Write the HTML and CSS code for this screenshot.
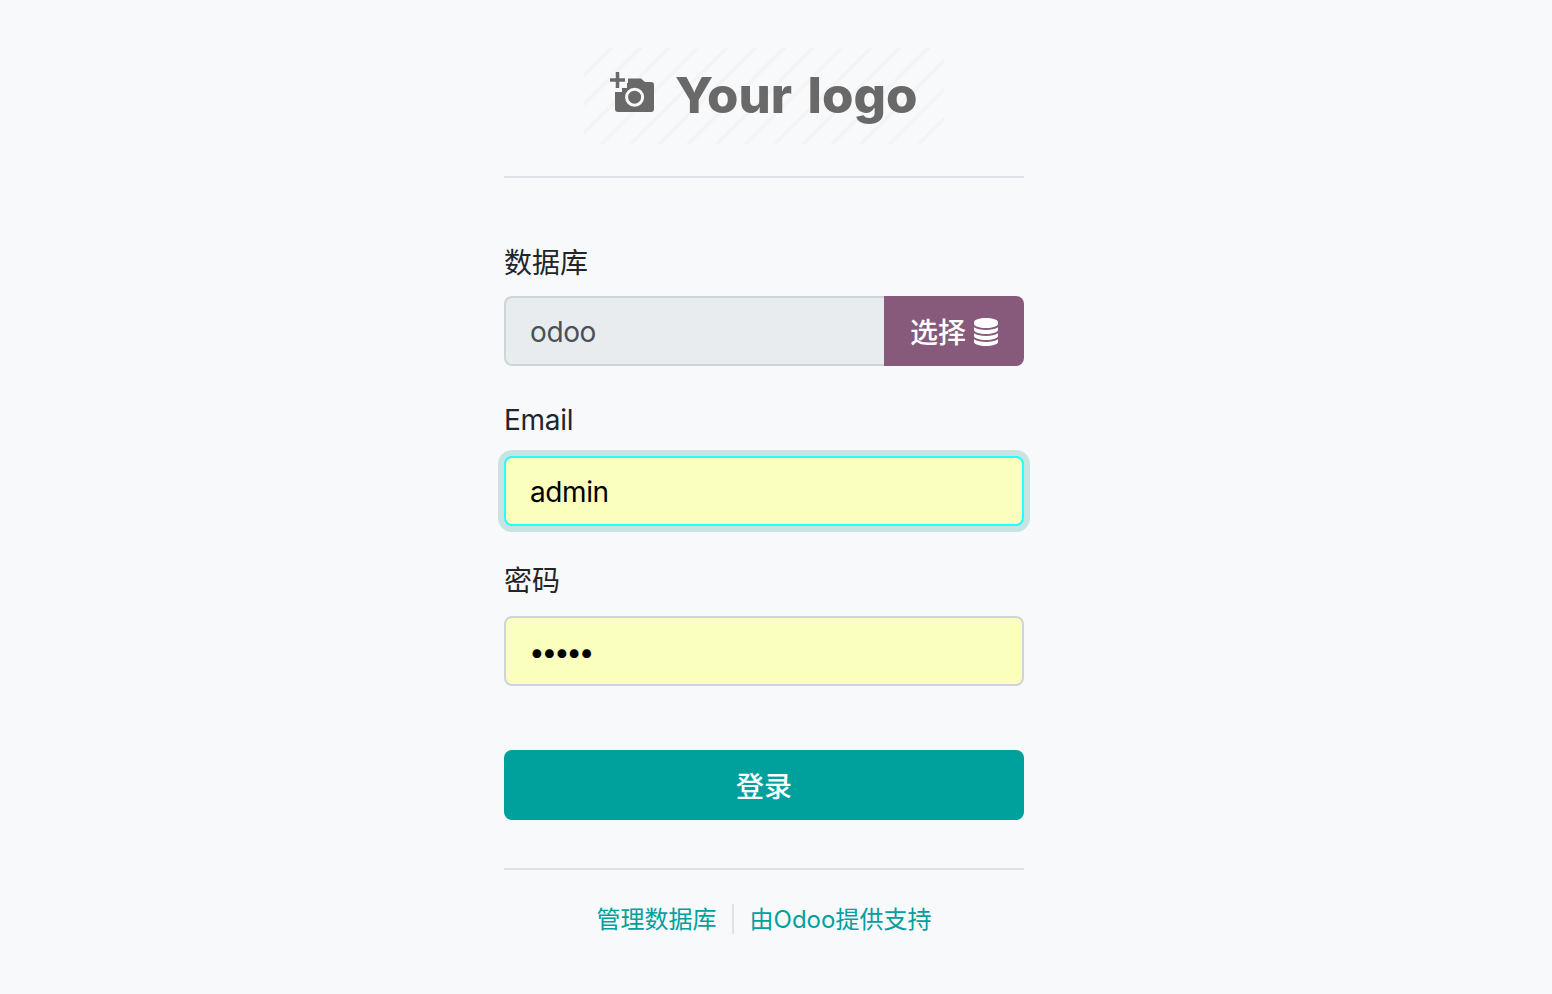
FILE: index.html
```html
<!DOCTYPE html>
<html lang="zh-CN">
<head>
<meta charset="utf-8">
<title>Odoo</title>
<link rel="stylesheet" href="styles.css">
</head>
<body>
<main class="login">
  <header class="brand">
    <svg class="logo" width="360" height="96" viewBox="0 0 360 96">
      <defs>
        <pattern id="stripes" width="28.8" height="28.8" patternUnits="userSpaceOnUse" patternTransform="translate(-1.5 0)">
          <path class="stripe" d="M-3 31.8 31.8-3M-17.4 17.4 17.4-17.4M11.4 46.2 46.2 11.4"/>
        </pattern>
      </defs>
      <rect width="360" height="96" fill="url(#stripes)"/>
      <g class="mark">
        <path d="M43 35V40H38V44H31V61Q31 64 34 64H67Q70 64 70 61V37Q70 34 67 34H61L57 30.500H44V35Z"/>
        <path class="plus" d="M33.500 24V40M26 32H41"/>
        <circle class="ring" cx="50.600" cy="49.200" r="8"/>
      </g>
      <text class="logo-text" x="91" y="64.500" textLength="117" lengthAdjust="spacingAndGlyphs">Your</text>
      <text class="logo-text" x="223.500" y="64.500" textLength="110" lengthAdjust="spacingAndGlyphs">logo</text>
    </svg>
  </header>
  <form class="form">
    <label class="label" for="db">数据库</label>
    <div class="group">
      <input class="control db" id="db" value="odoo" readonly>
      <button class="select" type="button"><span class="select-text">选择</span>
        <svg width="24" height="28" viewBox="0 0 24 28" fill="#fff"><path d="M12 0C18.600 0 24 1.800 24 4V6C24 8.200 18.600 10 12 10S0 8.200 0 6V4C0 1.800 5.400 0 12 0ZM0 9.300C2.600 11.100 7.300 12 12 12S21.400 11.100 24 9.300V12C24 14.200 18.600 16 12 16S0 14.200 0 12ZM0 15.300C2.600 17.100 7.300 18 12 18S21.400 17.100 24 15.300V18C24 20.200 18.600 22 12 22S0 20.200 0 18ZM0 21.300C2.600 23.100 7.300 24 12 24S21.400 23.100 24 21.300V24C24 26.200 18.600 28 12 28S0 26.200 0 24Z"/></svg>
      </button>
    </div>
    <label class="label label-email" for="email">Email</label>
    <input class="control filled focused" id="email" value="admin">
    <label class="label label-password" for="password">密码</label>
    <input class="control filled password" id="password" type="password" value="admin">
    <button class="submit" type="button">登录</button>
  </form>
  <footer class="links">
    <a class="link">管理数据库</a>
    <a class="link powered">由Odoo提供支持</a>
  </footer>
</main>
</body>
</html>
```
FILE: styles.css
```css
* { box-sizing: border-box; }
body {
  margin: 0;
  background: #f8f9fb;
  color: #212529;
  font: 28px/42px Inter, "Noto Sans CJK SC", sans-serif;
}
.login { width: 520px; margin-left: 504px; padding-top: 48px; }
.brand {
  height: 130px;
  border-bottom: 2px solid #dee2e6;
  text-align: center;
}
.logo { display: block; margin: 0 auto; }
.stripe { stroke: #f3f4f6; stroke-width: 3.6; fill: none; }
.mark { fill: #696969; filter: blur(.6px); }
.plus { fill: none; stroke: #696969; stroke-width: 3.5; }
.ring { fill: #696969; stroke: #f8f9fb; stroke-width: 3; }
.logo-text { font: 800 50px Inter, sans-serif; fill: #696969; filter: blur(.6px); }
.form { display: flex; flex-direction: column; padding-top: 64px; }
.label { height: 54px; }
.label-email { height: 58px; margin-top: 32px; padding-top: 1px; letter-spacing: -.3px; }
.label-password { height: 58px; margin-top: 32px; padding-top: 2px; }
.group { display: flex; }
.control {
  width: 100%;
  height: 70px;
  padding: 2px 24px 0;
  border: 2px solid #ced4da;
  border-radius: 8px;
  outline: 0;
  font: inherit;
  letter-spacing: -.4px;
}
.db {
  width: 380px;
  border-right: 0;
  border-radius: 8px 0 0 8px;
  background: #e8ecef;
  color: #495057;
}
.select {
  display: flex;
  width: 140px;
  align-items: center;
  justify-content: center;
  gap: 8px;
  border: 0;
  border-radius: 0 8px 8px 0;
  background: #875a7b;
  color: #fff;
  font: 500 28px/42px Inter, "Noto Sans CJK SC", sans-serif;
  padding: 2px 0 0;
}
.select-text { padding-top: 2px; }
.filled { background: #faffbd; color: #000; }
.focused { border-color: #21ffff; box-shadow: 0 0 0 6px #c7e4e3; }
.password { padding-left: 23px; letter-spacing: -3.3px; }
.submit {
  height: 70px;
  margin-top: 64px;
  padding: 3px 0 0;
  border: 0;
  border-radius: 8px;
  background: #00a09d;
  color: #fff;
  font: 500 28px/42px Inter, "Noto Sans CJK SC", sans-serif;
}
.links {
  display: flex;
  justify-content: center;
  margin-top: 48px;
  padding-top: 34px;
  border-top: 2px solid #dee2e6;
  font-size: 24px;
  line-height: 32px;
}
.link { height: 30px; color: #00a09d; }
.powered { margin-left: 15px; padding-left: 16px; border-left: 2px solid #dee2e6; }
```
